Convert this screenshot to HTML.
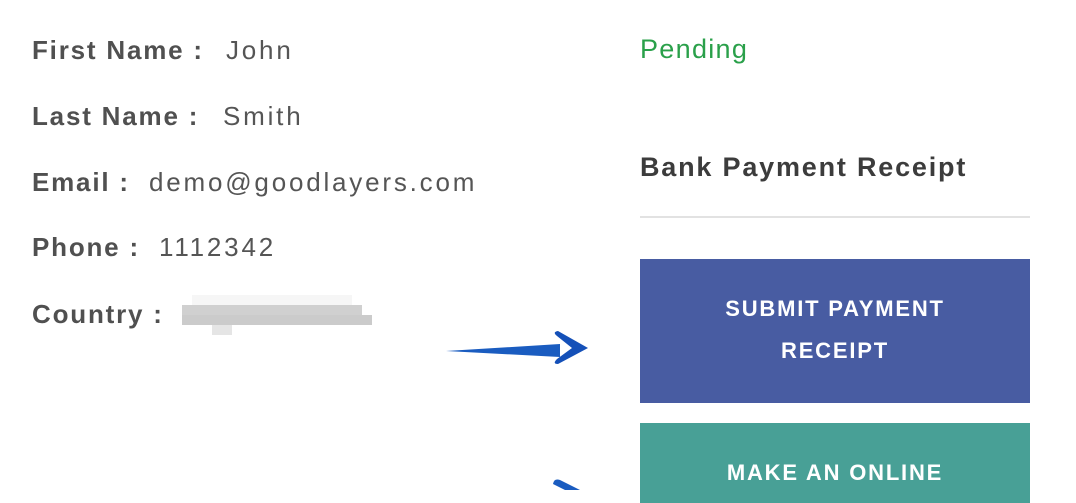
<!DOCTYPE html>
<html><head><style>
body{margin:0;width:1076px;height:490px;background:#fff;overflow:hidden;position:relative;font-family:"Liberation Sans",sans-serif}
.l{position:absolute;left:32px;font-size:26px;font-weight:bold;letter-spacing:1.8px;color:#505050;white-space:nowrap}
.v{position:absolute;font-size:26px;letter-spacing:2.8px;color:#555;white-space:nowrap}
.pend{position:absolute;left:640px;top:34px;font-size:27px;letter-spacing:1.3px;color:#2aa04a}
.h{position:absolute;left:640px;top:152px;font-size:27px;letter-spacing:1.8px;font-weight:bold;color:#3c3c3c}
.line{position:absolute;left:640px;top:216px;width:390px;height:2px;background:#e2e2e2}
.btn{position:absolute;left:640px;width:390px;color:#fff;font-weight:bold;font-size:22px;text-align:center;letter-spacing:1.8px;line-height:42px}
.pix{position:absolute;left:182px;top:295px}
.pix div{position:absolute;height:10px}
</style></head><body>
<div class="l" style="top:35px">First Name :</div><div class="v" style="left:226px;top:35px">John</div>
<div class="l" style="top:101px">Last Name :</div><div class="v" style="left:223px;top:101px">Smith</div>
<div class="l" style="top:167px">Email :</div><div class="v" style="left:149px;top:167px">demo@goodlayers.com</div>
<div class="l" style="top:232px">Phone :</div><div class="v" style="left:159px;top:232px">1112342</div>
<div class="l" style="top:299px">Country :</div>
<div class="pix">
<div style="left:10px;top:0;width:160px;background:#f6f6f6"></div>
<div style="left:0;top:10px;width:180px;background:#d0d0d0"></div>
<div style="left:0;top:20px;width:190px;background:#cbcbcb"></div>
<div style="left:30px;top:30px;width:20px;background:#e5e5e5"></div>
</div>
<svg style="position:absolute;left:0;top:0" width="1076" height="490">
<path d="M446 351 L560 344 L560 357 Z" fill="#1a5cc0"/>
<path d="M557 336 Q552 332 558 331 L588 348 L558 364 Q552 364 557 359 L572 348 Z" fill="#1450b8"/>
<path d="M553 484 Q554 478 560 480 L580 490 L565 490 Z" fill="#1a5cc0"/>
</svg>
<div class="pend">Pending</div>
<div class="h">Bank Payment Receipt</div>
<div class="line"></div>
<div class="btn" style="top:259px;height:144px;background:#485ca2;padding-top:29px;box-sizing:border-box">SUBMIT PAYMENT<br>RECEIPT</div>
<div class="btn" style="top:423px;height:80px;background:#48a096;padding-top:29px;box-sizing:border-box">MAKE AN ONLINE</div>
</body></html>
